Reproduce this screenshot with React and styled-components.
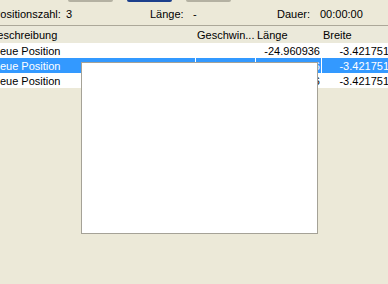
import React from 'react';
import styled, { createGlobalStyle } from 'styled-components';

const GlobalStyle = createGlobalStyle`
  html, body {
    margin: 0;
    padding: 0;
    background: #ece9d8;
    overflow: hidden;
  }
  body {
    font-family: "Liberation Sans", Arial, sans-serif;
    font-size: 11px;
    color: #000;
  }
`;

const Page = styled.div`
  position: relative;
  width: 388px;
  height: 284px;
  overflow: hidden;
`;

const TabStrip = styled.div`
  display: flex;
  height: 3px;
  padding-left: 68px;
  gap: 14px;
`;

const TabStub = styled.div`
  width: 45px;
  height: 2px;
  background: ${({ $active }) => ($active ? '#1c3f8c' : '#b4b1a2')};
  border-radius: 0 0 2px 2px;
`;

const InfoRow = styled.div`
  display: flex;
  align-items: center;
  height: 22px;
  margin-left: -7px;
`;

const Field = styled.span`
  flex: none;
  width: ${({ $w }) => $w}px;
  white-space: nowrap;
`;

const Table = styled.div`
  margin-left: -12px;
  width: 420px;
`;

const HeaderRow = styled.div`
  display: grid;
  grid-template-columns: 207px 60px 66px 87px;
  height: 17px;
  border-top: 1px solid #aca899;
  background: #ebe9da;
  align-items: center;
`;

const HeaderCell = styled.div`
  padding-left: 2px;
  white-space: nowrap;
  overflow: hidden;
`;

const Row = styled.div`
  display: grid;
  grid-template-columns: 207px 60px 66px 87px;
  height: 15px;
  align-items: center;
  background: ${({ $selected }) => ($selected ? '#3399ff' : '#fff')};
  color: ${({ $selected }) => ($selected ? '#fff' : '#000')};
`;

const Cell = styled.div`
  height: 100%;
  display: flex;
  align-items: center;
  justify-content: ${({ $right }) => ($right ? 'flex-end' : 'flex-start')};
  padding: 0 ${({ $pr }) => $pr || 0}px 0 3px;
  border-left: 1px solid ${({ $selected, $first }) => ($selected && !$first ? '#fff' : 'transparent')};
  white-space: nowrap;
  overflow: hidden;
`;

const Popup = styled.div`
  position: absolute;
  left: 81px;
  top: 62px;
  width: 235px;
  height: 170px;
  background: #fff;
  border: 1px solid #a5a297;
`;

const rows = [
  { name: 'Neue Position', len: '-24.960936', lat: '-3.421751' },
  { name: 'Neue Position', len: '-24.960936', lat: '-3.421751', selected: true },
  { name: 'Neue Position', len: '-24.960936', lat: '-3.421751' },
];

const App = () => (
  <Page>
    <GlobalStyle />
    <TabStrip>
      <TabStub />
      <TabStub $active />
      <TabStub />
    </TabStrip>
    <InfoRow>
      <Field $w={73}>Positionszahl:</Field>
      <Field $w={84}>3</Field>
      <Field $w={43}>Länge:</Field>
      <Field $w={84}>-</Field>
      <Field $w={43}>Dauer:</Field>
      <Field $w={60}>00:00:00</Field>
    </InfoRow>
    <Table>
      <HeaderRow>
        <HeaderCell>Beschreibung</HeaderCell>
        <HeaderCell>Geschwin...</HeaderCell>
        <HeaderCell>Länge</HeaderCell>
        <HeaderCell>Breite</HeaderCell>
      </HeaderRow>
      {rows.map((r, i) => (
        <Row key={i} $selected={r.selected}>
          <Cell $first $selected={r.selected}>{r.name}</Cell>
          <Cell $selected={r.selected} />
          <Cell $right $pr={1} $selected={r.selected}>{r.len}</Cell>
          <Cell $right $pr={19} $selected={r.selected}>{r.lat}</Cell>
        </Row>
      ))}
    </Table>
    <Popup />
  </Page>
);

export default App;
